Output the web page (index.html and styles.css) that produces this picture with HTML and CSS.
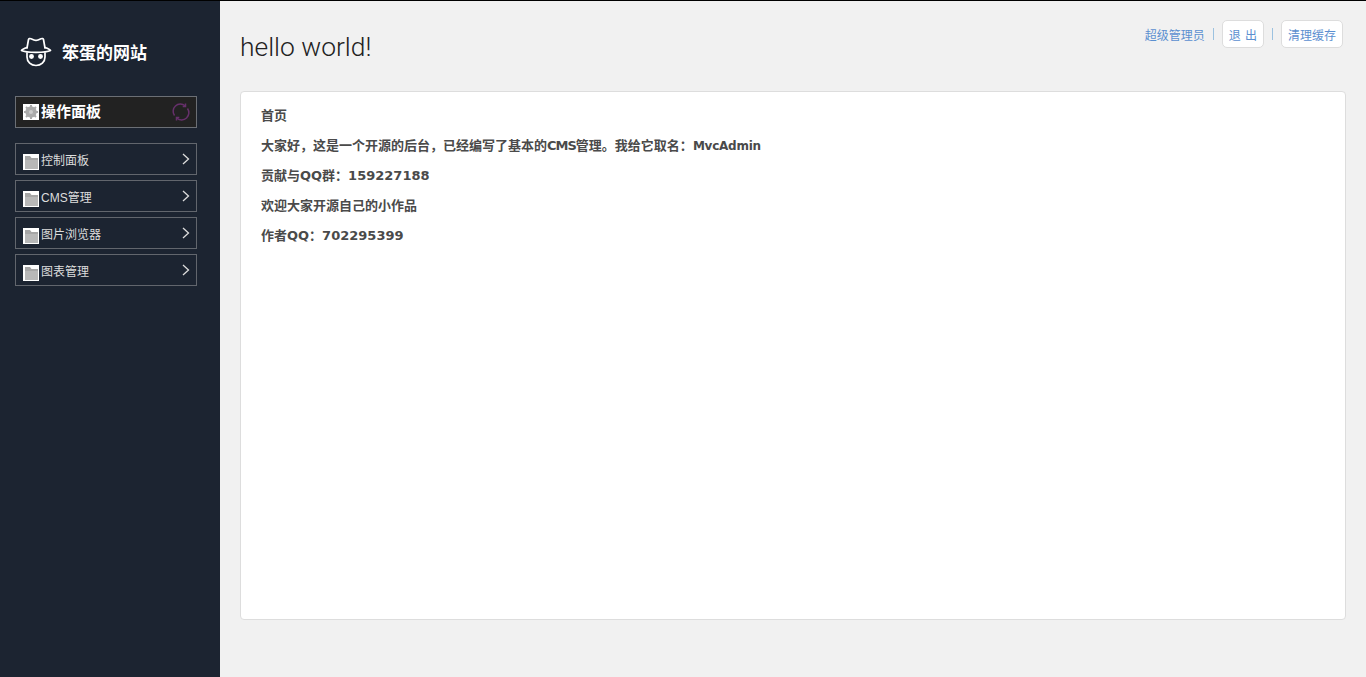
FILE: index.html
```html
<!DOCTYPE html>
<html lang="zh-CN">

<head>
  <meta charset="UTF-8">
  <title>笨蛋的网站</title>
  <link rel="stylesheet" href="styles.css">
</head>

<body>
  <aside class="sidebar">
    <div class="logo">
      <svg class="logo__icon" viewBox="0 0 32 32" width="32" height="32" fill="none" stroke="#fff" stroke-width="1.7" stroke-linejoin="round" stroke-linecap="round">
        <path d="M7 13 L8.5 4.5 Q9 3 11 3.8 L14 5 Q16 5.8 18 5 L21 3.8 Q23 3 23.5 4.5 L25 13" />
        <path d="M7 12.5 C4 13.5 2 14.5 1.5 15.5 C6 18 26 18 30.5 15.5 C30 14.5 28 13.5 25 12.5" />
        <path d="M7 18 V22 C7 27 11 30.5 16 30.5 C21 30.5 25 27 25 22 V18" />
        <circle cx="11.5" cy="21.5" r="1.6" fill="#fff" />
        <circle cx="20.5" cy="21.5" r="1.6" fill="#fff" />
      </svg>
      <span class="logo__text">笨蛋的网站</span>
    </div>

    <div class="panel-head">
      <span class="tile tile--gear">
        <svg viewBox="0 0 16 16" width="16" height="16">
          <circle cx="8" cy="8" r="4.2" fill="none" stroke="#aaa" stroke-width="3" />
          <path d="M8 1v14M1 8h14M3 3l10 10M13 3L3 13" stroke="#aaa" stroke-width="2" />
          <circle cx="8" cy="8" r="2" fill="#ccc" />
        </svg>
      </span>
      <span class="panel-head__text">操作面板</span>
      <svg class="refresh" viewBox="0 0 18 18" width="18" height="18" fill="none" stroke="#66306b" stroke-width="1.5">
        <path d="M2.5 12.5A7.2 7.2 0 0 1 13 2.8" />
        <path d="M15.5 5.5A7.2 7.2 0 0 1 5 15.2" />
        <path d="M13.5 .6V3.4H10.7M4.5 17.4V14.6H7.3" />
      </svg>
    </div>

    <ul class="menu">
      <li class="menu__item">
        <span class="tile"><svg viewBox="0 0 16 16" width="16" height="16"><path class="folder-tab" d="M2 2h5l1.5 2H15v3H2z" /><path class="folder" d="M2 6h13v9H2z" /></svg></span>
        <span class="menu__text">控制面板</span>
        <svg class="arrow" viewBox="0 0 8 12" width="8" height="12"><path d="M1 1l5.5 5L1 11" /></svg>
      </li>
      <li class="menu__item">
        <span class="tile"><svg viewBox="0 0 16 16" width="16" height="16"><path class="folder-tab" d="M2 2h5l1.5 2H15v3H2z" /><path class="folder" d="M2 6h13v9H2z" /></svg></span>
        <span class="menu__text">CMS管理</span>
        <svg class="arrow" viewBox="0 0 8 12" width="8" height="12"><path d="M1 1l5.5 5L1 11" /></svg>
      </li>
      <li class="menu__item">
        <span class="tile"><svg viewBox="0 0 16 16" width="16" height="16"><path class="folder-tab" d="M2 2h5l1.5 2H15v3H2z" /><path class="folder" d="M2 6h13v9H2z" /></svg></span>
        <span class="menu__text">图片浏览器</span>
        <svg class="arrow" viewBox="0 0 8 12" width="8" height="12"><path d="M1 1l5.5 5L1 11" /></svg>
      </li>
      <li class="menu__item">
        <span class="tile"><svg viewBox="0 0 16 16" width="16" height="16"><path class="folder-tab" d="M2 2h5l1.5 2H15v3H2z" /><path class="folder" d="M2 6h13v9H2z" /></svg></span>
        <span class="menu__text">图表管理</span>
        <svg class="arrow" viewBox="0 0 8 12" width="8" height="12"><path d="M1 1l5.5 5L1 11" /></svg>
      </li>
    </ul>
  </aside>

  <main class="main">
    <header class="top">
      <h1 class="top__title">hello world!</h1>
      <nav class="top__nav">
        <a class="top__link">超级管理员</a>
        <span class="top__sep"></span>
        <a class="top__btn top__btn--exit">退 出</a>
        <span class="top__sep"></span>
        <a class="top__btn">清理缓存</a>
      </nav>
    </header>

    <section class="card">
      <p>首页</p>
      <p>大家好，这是一个开源的后台，已经编写了基本的<span class="card__cms">CMS</span>管理。我给它取名：<span class="card__name">MvcAdmin</span></p>
      <p>贡献与QQ群：159227188</p>
      <p>欢迎大家开源自己的小作品</p>
      <p>作者QQ：702295399</p>
    </section>
  </main>
</body>

</html>
```

FILE: styles.css
```css
* {
  padding: 0;
  margin: 0;
  border: 0;
  box-sizing: border-box;
}

html,
body {
  height: 100%;
}

body {
  display: flex;
  overflow: hidden;
  background: #f1f1f1;
  border-top: 1px solid #000;
  font-family: "Liberation Sans", "Noto Sans CJK SC", sans-serif;
  font-size: 13px;
}

ul li {
  list-style: none;
}

/*--------------------*/
.sidebar {
  flex: 0 0 220px;
  padding: 0 23px 0 15px;
  background: #1c2431;
}

.logo {
  display: flex;
  align-items: center;
  height: 95px;
  padding: 5px 0 0 5px;
  color: #fff;
}

.logo__icon {
  display: block;
}

.logo__text {
  margin-left: 10px;
  font-family: "Noto Sans CJK SC", sans-serif;
  font-size: 17px;
  font-weight: 700;
}

.panel-head {
  display: flex;
  align-items: center;
  height: 32px;
  padding: 0 6px 0 7px;
  background: #222;
  border: 1px solid #6b6f75;
  color: #fff;
}

.panel-head__text {
  margin-top: -4px;
  font-family: "Noto Sans CJK SC", sans-serif;
  font-size: 15px;
  font-weight: 700;
}

.refresh {
  margin-left: auto;
}

.tile {
  display: block;
  flex: none;
  width: 16px;
  height: 16px;
  background: #fff;
}

.tile--gear {
  margin-right: 2px;
}

.menu {
  display: flex;
  flex-direction: column;
  gap: 5px;
  margin-top: 15px;
}

.menu__item {
  display: flex;
  align-items: center;
  height: 32px;
  padding: 0 6px 0 7px;
  border: 1px solid #62666d;
  color: #ddd;
}

.menu__item .tile {
  margin-top: 6px;
}

.menu__text {
  margin-left: 2px;
  font-size: 12px;
}

.folder {
  fill: #b8b8b8;
}

.folder-tab {
  fill: #a6a6a6;
}

.arrow {
  margin-left: auto;
  fill: none;
  stroke: #ddd;
  stroke-width: 1.3;
}

.main {
  flex: 1;
  padding: 0 20px;
}

.top {
  display: flex;
  justify-content: space-between;
  height: 90px;
}

.top__title {
  padding-top: 30px;
  font-family: Roboto, sans-serif;
  font-size: 26.4px;
  font-weight: 300;
  line-height: 33px;
  color: #222;
}

.top__nav {
  display: flex;
  align-items: center;
  height: 28px;
  margin: 19px 3px 0 0;
  color: #5b8fd0;
  font-size: 12px;
}

.top__sep {
  width: 1px;
  height: 12px;
  margin: 0 8px;
  background: #9cc2e0;
}

.top__btn {
  height: 28px;
  padding: 0 6px;
  line-height: 30px;
  background: #fff;
  border: 1px solid #ddd;
  border-radius: 5px;
}

.top__btn--exit {
  word-spacing: 1px;
}

.card {
  height: 529px;
  padding: 14px 20px;
  background: #fff;
  border: 1px solid #ddd;
  border-radius: 4px;
  color: #4a4a4a;
  font-family: "DejaVu Sans", "Noto Sans CJK SC", sans-serif;
  font-size: 13px;
  font-weight: 700;
}

.card p {
  height: 30px;
  line-height: 20px;
}

.card__cms {
  letter-spacing: -1px;
}

.card__name {
  font-size: 12px;
  letter-spacing: -.25px;
}
```
